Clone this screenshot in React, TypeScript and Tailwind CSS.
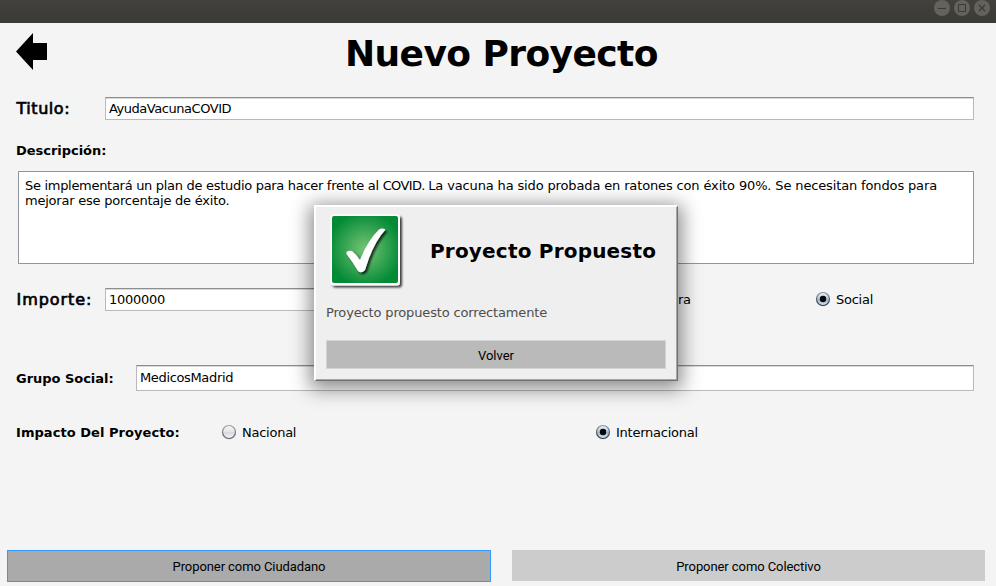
import type { ReactNode } from "react";

function Radio({ label, checked = false }: { label: string; checked?: boolean }) {
  return (
    <div className="flex items-center gap-[5px]">
      <svg className="-mt-0.5" width="16" height="16" viewBox="0 0 16 16">
        <defs>
          <linearGradient id="radioOff" x1="0" y1="0" x2="0" y2="1">
            <stop offset="0" stopColor="#f8f8f9" />
            <stop offset="0.48" stopColor="#e3e5e8" />
            <stop offset="0.52" stopColor="#d5d8dc" />
            <stop offset="1" stopColor="#f4f5f7" />
          </linearGradient>
          <linearGradient id="radioOn" x1="0" y1="0" x2="0" y2="1">
            <stop offset="0" stopColor="#f0f4f8" />
            <stop offset="0.48" stopColor="#b4c3d2" />
            <stop offset="0.52" stopColor="#a1b4c6" />
            <stop offset="1" stopColor="#d8e6f2" />
          </linearGradient>
          <linearGradient id="ringOff" x1="0" y1="0" x2="0" y2="1">
            <stop offset="0" stopColor="#a0a2a5" />
            <stop offset="1" stopColor="#5c5e62" />
          </linearGradient>
          <linearGradient id="ringOn" x1="0" y1="0" x2="0" y2="1">
            <stop offset="0" stopColor="#8796a6" />
            <stop offset="1" stopColor="#26374a" />
          </linearGradient>
        </defs>
        <circle cx="8" cy="8.6" r="7" fill="#c8ccd2" opacity="0.6" />
        <circle cx="8" cy="8" r="6.5" fill={checked ? "url(#radioOn)" : "url(#radioOff)"} stroke={checked ? "url(#ringOn)" : "url(#ringOff)"} strokeWidth="1.2" />
        {checked && <circle cx="8" cy="8" r="3.2" fill="#050709" />}
      </svg>
      <span className="text-[13px] leading-4 tracking-[-0.25px]">{label}</span>
    </div>
  );
}

function Field({ value, className }: { value: string; className: string }) {
  return (
    <div className={`border border-[#b9b9b9] border-t-[#8e8e8e] bg-white pl-[3px] text-[13px] shadow-[inset_0_1px_0_#d9d9d9] ${className}`}>
      {value}
    </div>
  );
}

function WindowButton({ children }: { children: ReactNode }) {
  return (
    <svg width="16" height="16" viewBox="0 0 16 16" fill="none" stroke="#3b3a35" strokeWidth="1">
      <circle cx="8" cy="8" r="8" fill="#63625b" stroke="none" />
      {children}
    </svg>
  );
}

function Dialog() {
  return (
    <div className="absolute left-[314px] top-[205px] h-[176px] w-[364px] border-t-2 border-r border-b border-l-2 border-t-white border-l-white border-r-[#727272] border-b-[#727272] bg-[#efefef] px-[10px] pt-[7px] shadow-[inset_-1px_-1px_0_#a6a6a6,0_4px_18px_4px_rgba(0,0,0,0.45)]">
      <div className="flex h-[74px] items-start">
        <svg className="ml-[3px]" width="75" height="76" viewBox="0 0 75 76">
          <defs>
            <radialGradient id="green" cx="0.5" cy="0.5" r="0.56">
              <stop offset="0" stopColor="#78c578" />
              <stop offset="1" stopColor="#038a35" />
            </radialGradient>
            <filter id="soft" x="-20%" y="-20%" width="150%" height="150%">
              <feDropShadow dx="2" dy="2" stdDeviation="1.2" floodColor="#000" floodOpacity="0.75" />
            </filter>
          </defs>
          <rect x="1.5" y="0.5" width="69.5" height="71" rx="3" fill="#fff" filter="url(#soft)" />
          <rect x="3" y="2" width="66" height="67" rx="2" fill="url(#green)" />
          <path d="M17.5 38Q20 36 23 37Q28 41 31 46Q39 26 50 15.5Q53 13.5 56.5 15.5Q44 29 36 56Q32.500 60 29 57Q23 47 17.5 40Z" fill="#fff" filter="url(#soft)" />
        </svg>
        <h2 className="mt-[25px] ml-[26px] text-[20px] leading-6 font-bold tracking-[0.2px] whitespace-nowrap">Proyecto Propuesto</h2>
      </div>
      <p className="mt-[17px] text-[13px] leading-4 tracking-[-0.15px] text-[#4d4d4d]">Proyecto propuesto correctamente</p>
      <button className="mt-[19px] flex h-[29px] w-[340px] items-center justify-center border border-[#d2d4d9] bg-[#bababa] pt-[3px] font-['Roboto',sans-serif] text-[13px] leading-5">Volver</button>
    </div>
  );
}

export default function App() {
  return (
    <div className="relative flex h-[586px] w-[996px] flex-col overflow-hidden bg-[#f4f4f4] font-['DejaVu_Sans',sans-serif] text-black">
      <div className="flex h-[23px] shrink-0 justify-end gap-1 bg-linear-to-b from-[#42413c] to-[#3b3a36] pr-[6px]">
        <WindowButton><path d="M4 8.5H12" /></WindowButton>
        <WindowButton><path d="M4.5 4.5H11.5V11.5H4.5Z" /></WindowButton>
        <WindowButton><path d="M5 5L11 11M11 5L5 11" strokeWidth="1.4" /></WindowButton>
      </div>
      <header className="flex h-[74px] shrink-0 pt-[10px]">
        <svg className="ml-4 shrink-0" width="32" height="37" viewBox="0 0 32 37"><path d="M0 18.5L17 0V10H31V27H17V37Z" /></svg>
        <h1 className="ml-[297px] text-[36px] leading-[42px] font-bold tracking-[-0.58px]">Nuevo Proyecto</h1>
      </header>
      <div className="flex h-[23px] shrink-0 items-center pl-4 pr-[22px]">
        <label className="w-[89px] pl-[0.5px] text-[16px] tracking-[0.55px] [-webkit-text-stroke:0.7px_black]">Titulo:</label>
        <Field value="AyudaVacunaCOVID" className="h-[23px] flex-1 leading-[21px] tracking-[-0.46px]" />
      </div>
      <label className="mt-[23px] ml-4 text-[13px] leading-4 font-bold tracking-[-0.03px]">Descripción:</label>
      <div className="mt-[12px] mr-[22px] ml-[18px] h-[93px] shrink-0 border border-[#9295a0] bg-white px-[6px] pt-[6px] text-[13px] leading-[15px] tracking-[-0.23px]">
        <p className="whitespace-nowrap">
          <span className="tracking-[-0.3px]">Se implementará un plan de estudio para hacer frente al </span>
          <span className="tracking-[-0.65px]">COVID. </span>
          <span className="tracking-[-0.14px]">La vacuna ha sido probada en ratones con éxito 90%. Se necesitan fondos para</span>
        </p>
        <p>mejorar ese porcentaje de éxito.</p>
      </div>
      <div className="mt-6 flex h-[23px] shrink-0 items-center pl-4">
        <label className="w-[89px] pl-[0.5px] text-[16px] tracking-[0.95px] [-webkit-text-stroke:0.7px_black]">Importe:</label>
        <Field value="1000000" className="h-[23px] w-[290px] leading-[21px] tracking-[-0.27px]" />
        <div className="ml-[229px] w-[191px]"><Radio label="Cultura" /></div>
        <Radio label="Social" checked />
      </div>
      <div className="mt-[54px] flex h-[26px] shrink-0 items-center pl-4 pr-[22px]">
        <label className="w-[120px] pt-[2px] text-[13px] font-bold tracking-[-0.03px]">Grupo Social:</label>
        <Field value="MedicosMadrid" className="h-[26px] flex-1 leading-[24px] tracking-[-0.35px]" />
      </div>
      <div className="mt-[34px] flex h-4 shrink-0 items-center pl-4">
        <label className="w-[205px] text-[13px] font-bold tracking-[0.05px]">Impacto Del Proyecto:</label>
        <div className="w-[374px]"><Radio label="Nacional" /></div>
        <Radio label="Internacional" checked />
      </div>
      <div className="mt-auto mb-1 flex gap-[21px] pl-[7px] font-['Roboto',sans-serif] text-[13px] leading-5 tracking-[-0.08px]">
        <button className="h-8 w-[484px] border border-[#3399ff] bg-[#aaaaaa] pt-px">Proponer como Ciudadano</button>
        <button className="h-[31px] w-[473px] bg-[#cccccc] pt-[3px]">Proponer como Colectivo</button>
      </div>
      <Dialog />
    </div>
  );
}
